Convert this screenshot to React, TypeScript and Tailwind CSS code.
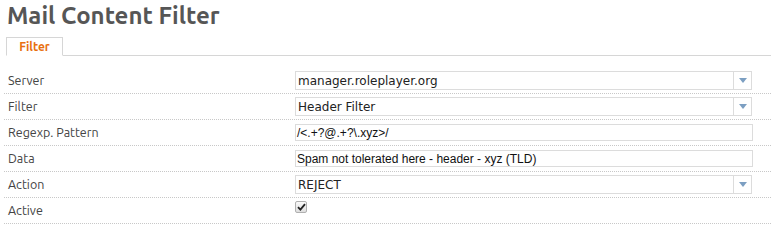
import React from 'react';

const LABEL_FONT = "font-['Ubuntu','Open_Sans','Noto_Sans',sans-serif]";

type Row = {
  label: string;
  kind: 'select' | 'text' | 'check';
  value?: string;
};

const rows: Row[] = [
  { label: 'Server', kind: 'select', value: 'manager.roleplayer.org' },
  { label: 'Filter', kind: 'select', value: 'Header Filter' },
  { label: 'Regexp. Pattern', kind: 'text', value: '/<.+?@.+?\\.xyz>/' },
  { label: 'Data', kind: 'text', value: 'Spam not tolerated here - header - xyz (TLD)' },
  { label: 'Action', kind: 'select', value: 'REJECT' },
  { label: 'Active', kind: 'check' },
];

function SelectBox({ value }: { value: string }) {
  return (
    <div className="flex h-[19px] w-[457px] items-stretch border border-[#dcdcdc] bg-white">
      <div className="flex flex-1 items-center pl-[2px] font-['DejaVu_Sans',sans-serif] text-[12px] leading-none text-[#222]">
        {value}
      </div>
      <div className="flex w-[18px] items-center justify-center border-l border-[#dcdcdc]">
        <svg width="8" height="5" viewBox="0 0 8 5">
          <path d="M0 0 L8 0 L4 5 Z" fill="#7c9fc2" />
        </svg>
      </div>
    </div>
  );
}

function TextBox({ value }: { value: string }) {
  return (
    <div className="flex h-[17px] w-[458px] items-center border border-[#dcdcdc] bg-white pl-[1px] font-['Liberation_Sans',Arial,sans-serif] text-[12px] leading-none text-[#111]">
      {value}
    </div>
  );
}

function CheckBox() {
  return (
    <span className="mt-[-8px] flex h-[12px] w-[12px] items-center justify-center rounded-[2px] border border-[#b0b0b0] bg-gradient-to-b from-[#fafafa] to-[#dedede]">
      <svg width="9" height="8" viewBox="0 0 9 8">
        <path d="M1 4.2 L3.4 6.6 L8 1.2" fill="none" stroke="#222" strokeWidth="1.8" />
      </svg>
    </span>
  );
}

export default function App() {
  return (
    <div className="h-[244px] w-[771px] overflow-hidden bg-white">
      <h1 className={`${LABEL_FONT} pl-[7px] pt-[1px] text-[24px] font-bold leading-[30px] text-[#565656]`}>
        Mail Content Filter
      </h1>

      <div className="mt-[6px] ml-[6px] flex border-b border-[#d6d6d6]">
        <div className="mb-[-1px] flex h-[19px] w-[57px] items-center justify-center border border-b-white border-[#d6d6d6] bg-white">
          <span className={`${LABEL_FONT} text-[12px] font-bold text-[#e8700f]`}>Filter</span>
        </div>
      </div>

      <div className="mt-[12px] pl-[4px]">
        {rows.map((row) => (
          <div
            key={row.label}
            className="flex h-[26px] items-center border-b border-dotted border-[#c8c8c8]"
          >
            <div className={`${LABEL_FONT} w-[291px] pl-[4px] text-[12.5px] text-[#444]`}>
              {row.label}
            </div>
            {row.kind === 'select' && <SelectBox value={row.value ?? ''} />}
            {row.kind === 'text' && <TextBox value={row.value ?? ''} />}
            {row.kind === 'check' && <CheckBox />}
          </div>
        ))}
      </div>
    </div>
  );
}
